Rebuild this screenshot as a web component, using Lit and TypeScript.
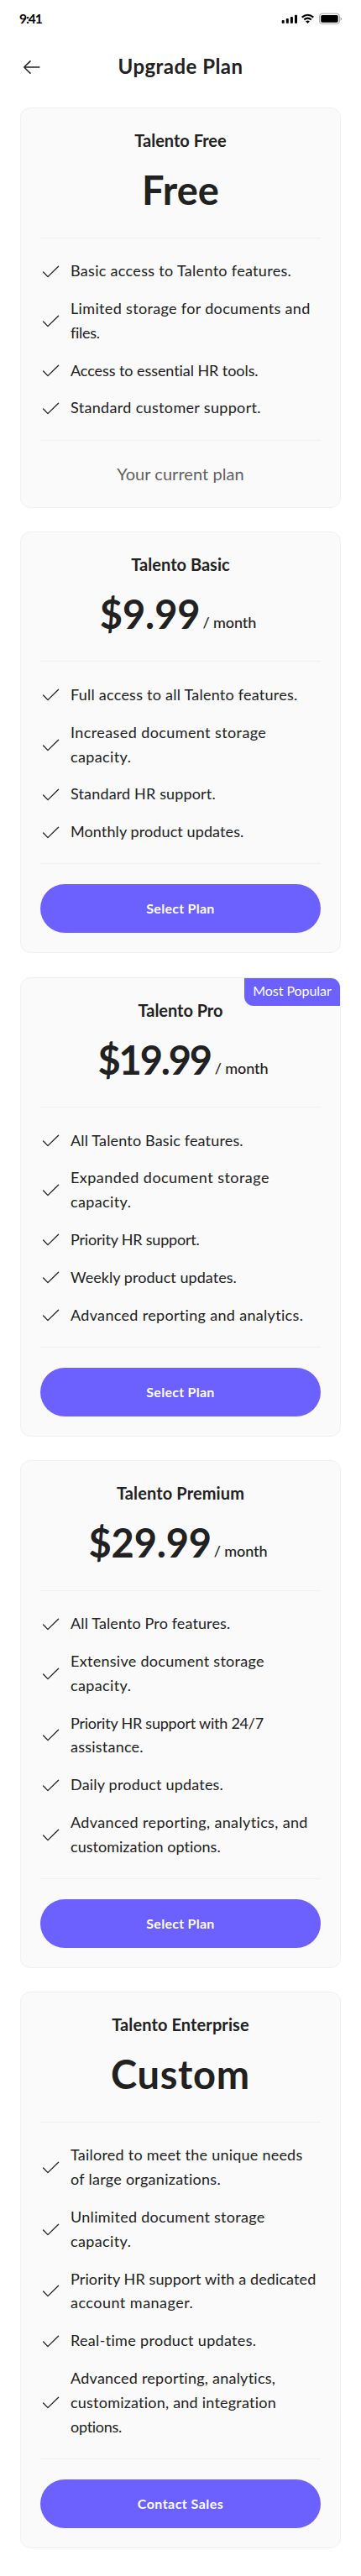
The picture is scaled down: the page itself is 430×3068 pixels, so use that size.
import { LitElement, html, css } from "lit";
import { customElement, property } from "lit/decorators.js";
import { classMap } from "lit/directives/class-map.js";
import { styleMap } from "lit/directives/style-map.js";

/** A line of text and the tracking (px) it is set with. */
type Line = [text: string, tracking: number];

interface Plan {
  name: Line;
  price: Line;
  monthly?: boolean;
  popular?: boolean;
  features: Line[][];
  action?: Line;
}

const plans: Plan[] = [
  {
    name: ["Talento Free", 0],
    price: ["Free", 0.1],
    features: [
      [["Basic access to Talento features.", 0.31]],
      [["Limited storage for documents and", 0.34], ["files.", -0.3]],
      [["Access to essential HR tools.", -0.07]],
      [["Standard customer support.", 0.33]],
    ],
  },
  {
    name: ["Talento Basic", 0.02],
    price: ["$9.99", -0.1],
    monthly: true,
    features: [
      [["Full access to all Talento features.", 0.24]],
      [["Increased document storage", 0.4], ["capacity.", 0.38]],
      [["Standard HR support.", 0.15]],
      [["Monthly product updates.", 0.1]],
    ],
    action: ["Select Plan", 0.27],
  },
  {
    name: ["Talento Pro", -0.05],
    price: ["$19.99", -2.2],
    monthly: true,
    popular: true,
    features: [
      [["All Talento Basic features.", 0.16]],
      [["Expanded document storage", 0.46], ["capacity.", 0.38]],
      [["Priority HR support.", -0.2]],
      [["Weekly product updates.", 0.05]],
      [["Advanced reporting and analytics.", 0.32]],
    ],
    action: ["Select Plan", 0.27],
  },
  {
    name: ["Talento Premium", 0.12],
    price: ["$29.99", -0.2],
    monthly: true,
    features: [
      [["All Talento Pro features.", 0.12]],
      [["Extensive document storage", 0.29], ["capacity.", 0.38]],
      [["Priority HR support with 24/7", -0.23], ["assistance.", 0.23]],
      [["Daily product updates.", 0.2]],
      [["Advanced reporting, analytics, and", 0.36], ["customization options.", 0.03]],
    ],
    action: ["Select Plan", 0.27],
  },
  {
    name: ["Talento Enterprise", 0.1],
    price: ["Custom", 0.7],
    features: [
      [["Tailored to meet the unique needs", 0.23], ["of large organizations.", 0.27]],
      [["Unlimited document storage", 0.29], ["capacity.", 0.38]],
      [["Priority HR support with a dedicated", 0.12], ["account manager.", 0.48]],
      [["Real-time product updates.", 0.32]],
      [["Advanced reporting, analytics,", 0.24], ["customization, and integration", 0.22], ["options.", -0.27]],
    ],
    action: ["Contact Sales", 0.46],
  },
];

const tracked = ([text, tracking]: Line) =>
  html`<span style=${styleMap({ letterSpacing: `${tracking}px` })}>${text}</span>`;

@customElement("plan-card")
class PlanCard extends LitElement {
  @property({ attribute: false }) plan!: Plan;

  static styles = css`
    :host {
      display: block;
      position: relative;
      box-sizing: border-box;
      padding: 23px;
      border: 1px solid #f0f0f0;
      border-radius: 12px;
      background: #fafafa;
    }
    h2 {
      margin: 0 0 12px;
      padding-bottom: 2px;
      font-size: 20px;
      font-weight: 700;
      line-height: 30px;
      text-align: center;
    }
    .price {
      height: 62.4px;
      line-height: 61.4px;
      font-size: 47px;
      font-weight: 700;
      text-align: center;
      white-space: nowrap;
    }
    .price.monthly {
      padding-right: 6px;
    }
    .price.popular {
      padding: 0 0 0 6px;
    }
    .per {
      margin-left: 3px;
      font-size: 18px;
      font-weight: 500;
      line-height: 1;
      letter-spacing: -0.1px;
      vertical-align: 1px;
    }
    .popular .per {
      margin-left: 5px;
    }
    ul {
      list-style: none;
      margin: 24px 0;
      padding: 24.6px 0 23.4px;
      border-top: 1px solid #f0f0f0;
      border-bottom: 1px solid #f0f0f0;
      display: flex;
      flex-direction: column;
      gap: 16px;
    }
    li {
      display: flex;
      align-items: center;
      gap: 12px;
      font-size: 18px;
      line-height: 28.8px;
      white-space: nowrap;
    }
    li svg {
      flex: none;
    }
    .line {
      display: block;
    }
    .current {
      margin: 0;
      font-size: 20px;
      line-height: 31px;
      padding-bottom: 1px;
      letter-spacing: 0.05px;
      text-align: center;
      color: #616161;
    }
    button {
      display: block;
      width: 100%;
      height: 58px;
      border: 0;
      padding: 0;
      border-radius: 29px;
      background: #6c61ff;
      color: #fff;
      font: 700 16px/58px Lato, sans-serif;
    }
    .badge {
      position: absolute;
      top: 0;
      right: 0;
      box-sizing: border-box;
      width: 114px;
      height: 33px;
      border-radius: 0 11px 0 11px;
      background: #6c61ff;
      color: #fff;
      font-size: 16px;
      line-height: 29px;
      letter-spacing: -0.05px;
      text-align: center;
    }
  `;

  render() {
    const p = this.plan;
    const priceClasses = { price: true, monthly: !!p.monthly, popular: !!p.popular };
    return html`
      ${p.popular ? html`<div class="badge">Most Popular</div>` : null}
      <h2>${tracked(p.name)}</h2>
      <div class=${classMap(priceClasses)}>${tracked(p.price)}${p.monthly ? html`<span class="per">/ month</span>` : null}</div>
      <ul>
        ${p.features.map(
          (lines) => html`<li>
            <svg width="24" height="24" viewBox="0 0 24 24" fill="none" stroke="#212121" stroke-width="1.3" stroke-linecap="round" stroke-linejoin="round">
              <path d="M3.6 13L9 18.6L21.6 6.3" />
            </svg>
            <div>${lines.map((l) => html`<div class="line">${tracked(l)}</div>`)}</div>
          </li>`
        )}
      </ul>
      ${p.action ? html`<button>${tracked(p.action)}</button>` : html`<p class="current">Your current plan</p>`}
    `;
  }
}

@customElement("app-root")
class AppRoot extends LitElement {
  static styles = css`
    :host {
      display: block;
      box-sizing: border-box;
      min-height: 3068px;
      background: #fff;
      color: #212121;
      font-family: Lato, sans-serif;
    }
    .status {
      display: flex;
      justify-content: space-between;
      align-items: center;
      height: 44px;
      padding: 0 22px 0 23px;
      color: #000;
    }
    .time {
      font-size: 15.5px;
      font-weight: 700;
      line-height: 20px;
      letter-spacing: -1.1px;
      padding-bottom: 1px;
    }
    header {
      display: grid;
      grid-template-columns: 28px 1fr 28px;
      align-items: center;
      height: 72px;
      padding: 0 24px;
    }
    h1 {
      margin: 0;
      padding-bottom: 2px;
      font-size: 24px;
      font-weight: 700;
      line-height: 36px;
      letter-spacing: 0.46px;
      text-align: center;
    }
    main {
      display: flex;
      flex-direction: column;
      gap: 28.4px;
      padding: 12.2px 24px 0;
    }
  `;

  render() {
    return html`
      <div class="status">
        <span class="time">9:41</span>
        <svg width="73" height="16" viewBox="335 14 73 16">
          <rect x="335.7" y="24" width="3" height="3.8" rx="0.9" />
          <rect x="340.8" y="22" width="3" height="5.8" rx="0.9" />
          <rect x="345.9" y="20" width="3" height="7.8" rx="0.9" />
          <rect x="351" y="17.7" width="3" height="10.1" rx="0.9" />
          <g fill="none" stroke="#000" stroke-width="2.1">
            <path d="M359.7 20.6Q366.5 14.9 373.3 20.6" />
            <path d="M362.2 23.4Q366.5 19.8 370.8 23.4" />
          </g>
          <path d="M364.1 25.3Q366.5 23.6 368.9 25.3L366.5 27.9Z" />
          <rect x="380.5" y="16.2" width="24" height="12.2" rx="3.4" fill="none" stroke="#000" stroke-opacity="0.35" />
          <path d="M405.7 20.5V24.6Q407.1 24 407.1 22.5Q407.1 21 405.7 20.5Z" opacity="0.4" />
          <rect x="382.2" y="17.9" width="20.5" height="8.8" rx="1.6" />
        </svg>
      </div>
      <header>
        <svg width="28" height="28" viewBox="0 0 28 28" fill="none" stroke="#212121" stroke-width="1.6" stroke-linecap="round" stroke-linejoin="round">
          <path d="M4.8 14H22.8M12 6.8C9.7 9 7.2 11.6 4.8 14C7.2 16.4 9.7 19 12 21.2" />
        </svg>
        <h1>Upgrade Plan</h1>
      </header>
      <main>${plans.map((p) => html`<plan-card .plan=${p}></plan-card>`)}</main>
    `;
  }
}
